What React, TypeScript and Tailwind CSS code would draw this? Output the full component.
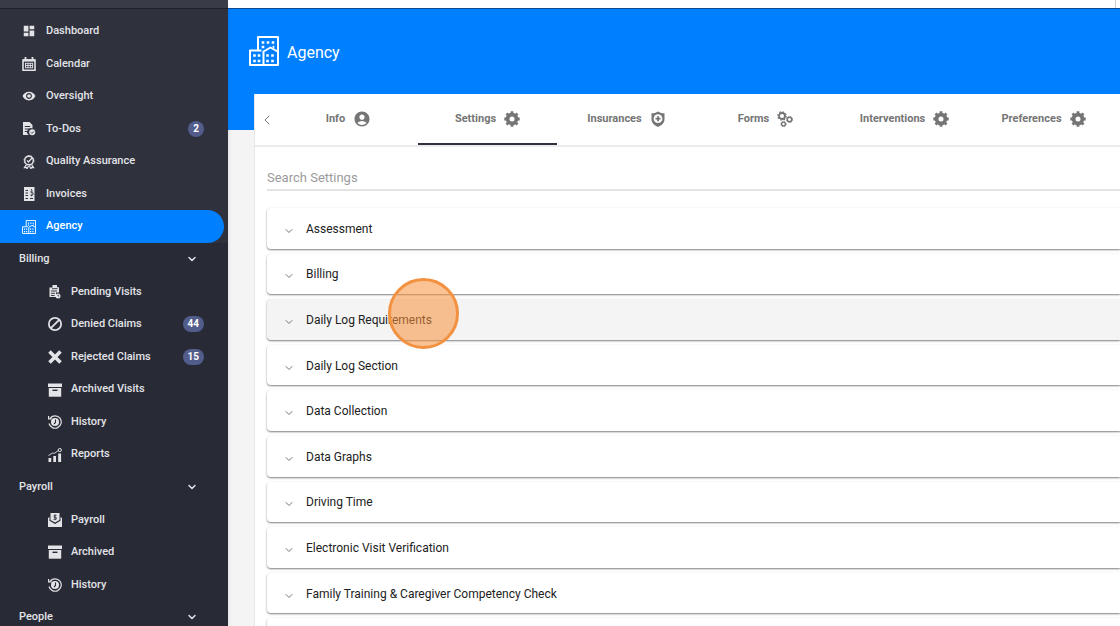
import { useState, type ReactNode } from "react";
import { MdAccountCircle, MdDashboard, MdRemoveRedEye } from "react-icons/md";
import { FaBan } from "react-icons/fa6";
import { ChevronDown, ChevronLeft } from "lucide-react";
import clsx from "clsx";

type NavItem = { label: string; icon: ReactNode; badge?: number };

function BuildingsIcon({ className }: { className: string }) {
  return (
    <svg viewBox="0 0 30 30" fill="none" stroke="currentColor" strokeWidth="2" className={className}>
      <path d="M9 14.500V1h20v28H1V14.500h11.500M14.500 29V15.500l7-4 7 4" strokeLinejoin="round" />
      <path d="M12.700 6.500h2.600m2.400 0h2.600m2.400 0h2.600M12.700 11h2.600m8.400 0h1.600" strokeWidth="2.600" />
      <path d="M4.200 19.500h2.600m1.900 0h2.600M4.200 25h2.600m1.900 0h2.600M17.200 19.500h2.600m2.400 0h2.600M17.200 25h2.600m2.400 0h2.600" strokeWidth="2.600" />
    </svg>
  );
}

function CalendarIcon() {
  return (
    <svg viewBox="0 0 14 14" fill="none" stroke="currentColor" className="size-3.5">
      <path d="M1 3h12v10.300H1z" strokeWidth="1.600" />
      <path d="M1 3.400h12" strokeWidth="2.400" />
      <path d="M3.500 0v3M10.500 0v3" strokeWidth="1.800" />
      <path d="M3 6.300h8M3 8.500h8M3 10.800h8M3.500 6v5M6 6v5M8.300 6v5M10.600 6v5" strokeWidth="0.900" />
    </svg>
  );
}

function TodoIcon() {
  return (
    <svg viewBox="0 0 14 14" fill="currentColor" className="size-3.5">
      <path d="M1 0h6.500L10.500 3v3.600A3.700 3.700 0 0 0 6.800 13H1z" />
      <path d="M2.800 4.500h5.500M2.800 7h4M2.800 9.500h3" stroke="#2f313d" />
      <circle cx="10.200" cy="10.300" r="3" />
      <path d="m8.900 10.400 1 1 1.900-2" fill="none" stroke="#2f313d" strokeWidth="0.900" />
    </svg>
  );
}

function QualityIcon() {
  return (
    <svg viewBox="0 0 14 14" fill="none" stroke="currentColor" className="size-3.5">
      <circle cx="7" cy="5.500" r="4.300" strokeWidth="1.400" />
      <circle cx="7" cy="5.500" r="5" strokeWidth="1" strokeDasharray="1.600 1.500" />
      <path d="m5 5.400 1.500 1.600L10 3" strokeWidth="1.300" />
      <path d="m4.500 9.500-2 3 1.800-.2.800 1.400L6.500 11M9.500 9.500l2 3-1.800-.2-.8 1.400L7.500 11" strokeWidth="1.200" />
    </svg>
  );
}

function InvoiceIcon() {
  return (
    <svg viewBox="0 0 14 14" fill="currentColor" className="size-3.5">
      <path d="M2 0h10.500v14H2z" />
      <path d="M3.500 3.500H6M3.500 6H6M3.500 8.500H6M3.500 11.500H6M8 11.500h3" stroke="#2f313d" />
      <path d="M9.500 2v1.300M10.800 4H9v1.800h2V8H8.300M9.500 8v1.300" fill="none" stroke="#2f313d" strokeWidth="0.900" />
    </svg>
  );
}

function PendingIcon() {
  return (
    <svg viewBox="0 0 14 14" fill="currentColor" className="size-3.5">
      <path d="M4.500 0H9v2.300h2v5.200H8V12H1.500V2.500h3z" />
      <path d="M4 3.700h5.500M3 6h6M3 8.300h4M3 10.500h3.500" stroke="#282b36" strokeWidth="0.900" />
      <circle cx="10" cy="11" r="2.500" />
      <path d="M10 9.500V11h1.300" fill="none" stroke="#282b36" strokeWidth="0.700" />
    </svg>
  );
}

function CrossIcon() {
  return (
    <svg viewBox="0 0 14 14" stroke="currentColor" strokeWidth="3.600" className="size-3.5">
      <path d="m1.500 1.500 11 11M12.500 1.500l-11 11" />
    </svg>
  );
}

function ArchiveIcon() {
  return (
    <svg viewBox="0 0 14 14" fill="currentColor" className="size-3.5">
      <path d="M0 .5h14V4H0z" />
      <path d="M.8 5h12.400v8.700H.8z" />
      <path d="M4.500 7.300h5" stroke="#282b36" strokeWidth="1.400" />
    </svg>
  );
}

function HistoryIcon() {
  return (
    <svg viewBox="0 0 14 14" fill="none" stroke="currentColor" className="size-3.5">
      <path d="M2.300 3A6.200 6.200 0 1 1 1 8.500M.6 1v2.800h3" strokeWidth="1.200" />
      <circle cx="7" cy="7" r="4" fill="currentColor" stroke="none" />
      <path d="M7.500 4.500v3L6 9" stroke="#282b36" strokeWidth="1.100" />
    </svg>
  );
}

function ReportsIcon() {
  return (
    <svg viewBox="0 0 14 14" fill="currentColor" className="size-3.5">
      <path d="M.5 10h2.700v4H.5zM5.300 8H8v6H5.300zM10.200 5.500h2.900V14h-2.900z" />
      <path d="m.5 7.500 4-2.500 2 .3L11 2" fill="none" stroke="currentColor" strokeWidth="0.900" />
      <circle cx="11.800" cy="2" r="1.600" fill="none" stroke="currentColor" />
    </svg>
  );
}

function PayrollIcon() {
  return (
    <svg viewBox="0 0 14 14" fill="currentColor" className="size-3.5">
      <path d="M2.500 0h9v7L7 9.500 2.500 7z" />
      <path d="M0 5l1.500-1v3.700L7 11l5.500-3.300V4L14 5v9H0z" />
      <path d="M8.500 2.300H6.200v2h2v2H5.500M7 1.500v5.700" fill="none" stroke="#282b36" strokeWidth="0.800" />
    </svg>
  );
}

function GearIcon() {
  return (
    <svg viewBox="0 0 16 16" fill="none" stroke="currentColor" className="size-4">
      <circle cx="8" cy="8" r="4.400" strokeWidth="3.800" />
      <path
        d="M8 .3v2M8 13.700v2M.3 8h2M13.700 8h2M2.500 2.500 4 4M12 12l1.500 1.500M2.500 13.500 4 12M12 4l1.500-1.500"
        strokeWidth="2.800"
      />
    </svg>
  );
}

function ShieldIcon() {
  return (
    <svg viewBox="0 0 16 16" fill="currentColor" className="size-4">
      <path d="M8 .5c2 1.300 4 1.800 6.500 1.800V8c0 4-2.500 6.300-6.500 8-4-1.700-6.500-4-6.500-8V2.300C4 2.300 6 1.800 8 .5z" />
      <circle cx="8" cy="7.700" r="4.400" fill="#fff" />
      <path d="M8 5.200v5M5.500 7.700h5" stroke="currentColor" strokeWidth="1.800" />
    </svg>
  );
}

function GearsIcon() {
  return (
    <svg viewBox="0 0 16 16" fill="none" stroke="currentColor" className="size-4">
      <circle cx="5" cy="5" r="3" strokeWidth="1.800" />
      <circle cx="5" cy="5" r="4.200" strokeWidth="1.200" strokeDasharray="1.700 1.600" />
      <circle cx="12.500" cy="8.500" r="2.200" strokeWidth="1.500" />
      <circle cx="12.500" cy="8.500" r="3" strokeWidth="1" strokeDasharray="1.200 1.200" />
      <circle cx="6.500" cy="13" r="1.900" strokeWidth="1.400" />
      <circle cx="6.500" cy="13" r="2.600" strokeWidth="0.900" strokeDasharray="1.100 1" />
    </svg>
  );
}

const mainItems: NavItem[] = [
  { label: "Dashboard", icon: <MdDashboard className="size-3.5" /> },
  { label: "Calendar", icon: <CalendarIcon /> },
  { label: "Oversight", icon: <MdRemoveRedEye className="size-3.5" /> },
  { label: "To-Dos", icon: <TodoIcon />, badge: 2 },
  { label: "Quality Assurance", icon: <QualityIcon /> },
  { label: "Invoices", icon: <InvoiceIcon /> },
  { label: "Agency", icon: <BuildingsIcon className="size-3.5" /> },
];

const billingItems: NavItem[] = [
  { label: "Pending Visits", icon: <PendingIcon /> },
  { label: "Denied Claims", icon: <FaBan className="size-3.5 -scale-x-100" />, badge: 44 },
  { label: "Rejected Claims", icon: <CrossIcon />, badge: 15 },
  { label: "Archived Visits", icon: <ArchiveIcon /> },
  { label: "History", icon: <HistoryIcon /> },
  { label: "Reports", icon: <ReportsIcon /> },
];

const payrollItems: NavItem[] = [
  { label: "Payroll", icon: <PayrollIcon /> },
  { label: "Archived", icon: <ArchiveIcon /> },
  { label: "History", icon: <HistoryIcon /> },
];

const tabs = [
  { label: "Info", icon: <MdAccountCircle className="size-[18px]" /> },
  { label: "Settings", icon: <GearIcon /> },
  { label: "Insurances", icon: <ShieldIcon /> },
  { label: "Forms", icon: <GearsIcon /> },
  { label: "Interventions", icon: <GearIcon /> },
  { label: "Preferences", icon: <GearIcon /> },
];

const settings = [
  "Assessment",
  "Billing",
  "Daily Log Requirements",
  "Daily Log Section",
  "Data Collection",
  "Data Graphs",
  "Driving Time",
  "Electronic Visit Verification",
  "Family Training & Caregiver Competency Check",
];

function NavLink({ item, nested, active }: { item: NavItem; nested?: boolean; active?: boolean }) {
  return (
    <a
      href="#"
      className={clsx(
        "mr-1 flex items-center pr-5",
        nested ? "gap-[9px] pl-12" : "gap-2.5 pl-[22px]",
        active && "rounded-r-full bg-[#0080ff] text-white"
      )}
    >
      <span className="flex w-3.5 shrink-0 justify-center">{item.icon}</span>
      <span className="grow">{item.label}</span>
      {item.badge && (
        <span className="min-w-4 rounded-full bg-[#525d8c] px-[5px] text-center text-[10px] leading-4 font-bold text-white">
          {item.badge}
        </span>
      )}
    </a>
  );
}

function SectionHeader({ label }: { label: string }) {
  return (
    <button type="button" className="flex items-center justify-between pr-[30px] pl-[19px]">
      {label}
      <ChevronDown className="size-3" strokeWidth={3} />
    </button>
  );
}

function Sidebar() {
  return (
    <aside className="z-10 flex w-[228px] shrink-0 flex-col bg-[#282b36] text-[11px] font-medium text-[#e3e4e8] shadow-md">
      <div className="h-[9px] shrink-0 border-b border-[#1d1f29] bg-[#393b47]" />
      <nav>
        <div className="bg-[#2f313d] pt-1.5">
          <div className="grid min-h-[228px] auto-rows-fr">
            {mainItems.map((item) => (
              <NavLink key={item.label} item={item} active={item.label === "Agency"} />
            ))}
          </div>
        </div>
        <div className="grid min-h-[228px] auto-rows-fr">
          <SectionHeader label="Billing" />
          {billingItems.map((item) => (
            <NavLink key={item.label} item={item} nested />
          ))}
        </div>
        <div className="grid min-h-[130px] auto-rows-fr">
          <SectionHeader label="Payroll" />
          {payrollItems.map((item) => (
            <NavLink key={item.label} item={item} nested />
          ))}
        </div>
        <div className="grid min-h-8 auto-rows-fr">
          <SectionHeader label="People" />
        </div>
      </nav>
    </aside>
  );
}

export default function App() {
  const [tab, setTab] = useState("Settings");
  const [search, setSearch] = useState("");

  return (
    <div className="flex h-screen overflow-hidden bg-[#f4f4f4] font-['Roboto',sans-serif]">
      <Sidebar />
      <div className="flex min-w-0 grow flex-col">
        <div className="flex h-[9px] shrink-0 justify-end border-b border-[#0b4a94] bg-white pr-1">
          <div className="border-l border-[#cfcfcf]" />
        </div>
        <header className="flex h-[121px] shrink-0 items-start gap-2 bg-[#0080ff] pt-[27px] pl-[21px] text-white">
          <BuildingsIcon className="size-[30px]" />
          <h1 className="pt-px text-base leading-8">Agency</h1>
        </header>
        <main className="-mt-9 ml-[26px] grow border-l border-[#e6e6e6] bg-white">
          <div className="flex h-[53px] border-b-2 border-[#ececec]">
            <button type="button" aria-label="Previous tabs" className="flex w-6 shrink-0 items-center justify-center text-[#757575]">
              <ChevronLeft className="size-4" strokeWidth={1.5} />
            </button>
            {tabs.map((t) => (
              <button
                key={t.label}
                type="button"
                onClick={() => setTab(t.label)}
                className={clsx(
                  "flex w-[139px] shrink-0 items-center justify-center gap-2 border-b-2 text-[11px] font-bold text-[#757575]",
                  tab === t.label ? "border-[#2f313d]" : "border-transparent"
                )}
              >
                <span className="pt-0.5">{t.label}</span>
                {t.icon}
              </button>
            ))}
          </div>
          <div className="pt-[18px] pl-3">
            <input
              type="text"
              aria-label="Search Settings"
              placeholder="Search Settings"
              value={search}
              onChange={(e) => setSearch(e.target.value)}
              className="block h-[26px] w-full border-b-2 border-[#e4e4e4] text-[13px] outline-none placeholder:text-[#9b9b9b]"
            />
            <div className="mt-[17px] grid min-h-[451px] auto-rows-fr gap-[5px]">
              {settings.map((name) => {
                const hovered = name === "Daily Log Requirements";
                return (
                  <button
                    key={name}
                    type="button"
                    className={clsx(
                      "flex items-center gap-[11px] rounded-l-sm pt-px pl-4 text-left text-xs text-[#212121] shadow-[0_1px_2px_rgba(0,0,0,0.5)]",
                      hovered ? "bg-[#f4f4f4]" : "bg-white"
                    )}
                  >
                    <ChevronDown className="mt-1 size-3 text-[#757575]" strokeWidth={2} />
                    <span className="relative">
                      {name}
                      {hovered && (
                        <span className="absolute -top-[34px] left-[82px] size-[71px] rounded-full border-[3px] border-[#f29140] bg-[#f7923c]/55" />
                      )}
                    </span>
                  </button>
                );
              })}
              <div className="rounded-l-sm bg-white shadow-[0_1px_2px_rgba(0,0,0,0.5)]" />
            </div>
          </div>
        </main>
      </div>
    </div>
  );
}
